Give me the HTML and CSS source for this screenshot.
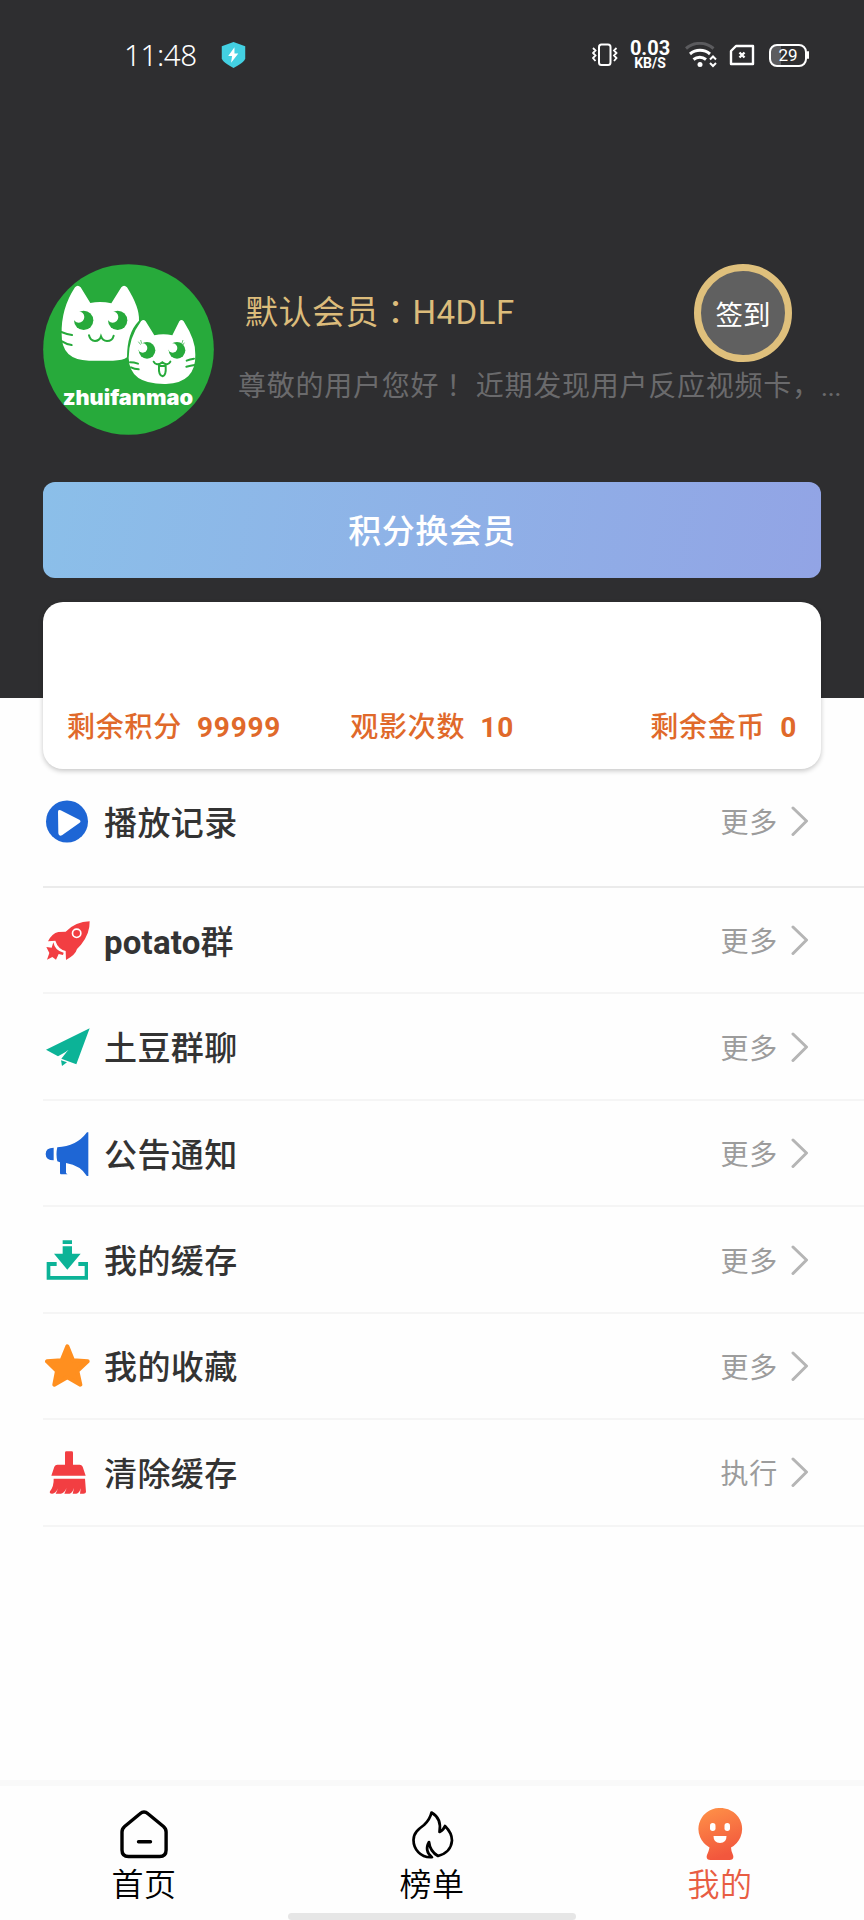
FILE: index.html
```html
<!DOCTYPE html>
<html lang="zh-CN">
<head>
<meta charset="utf-8">
<title>我的</title>
<link rel="stylesheet" href="styles.css">
</head>
<body>
<div class="app">
  <header class="hero">
    <div class="status">
      <div class="status-left">
        <span class="time">11:48</span>
        <svg class="shield" viewBox="0 0 26 28"><path d="M13 .5 25.200 5v12.500c0 3-6 7-12.200 10C7 24.500.8 20.500.8 17.500V5z" fill="#43d0e2"/><path d="M14 6 7.500 15h4l-1 7 7.500-9.500h-4z" fill="#fff"/></svg>
      </div>
      <div class="status-right">
        <svg class="vibrate" viewBox="0 0 26 24" fill="none" stroke="#fff"><rect x="7" y="1.500" width="11.500" height="20.500" rx="2.500" stroke-width="2"/><path d="m1 5 2.500 2.500L1 10l2.500 2.500L1 15l2.500 3M24.500 5 22 7.500l2.500 2.500-2.500 2.500L24.500 15 22 18" stroke-width="1.800"/></svg>
        <div class="speed"><b class="speed-num">0.03</b><b class="speed-unit">KB/S</b></div>
        <svg class="wifi" viewBox="0 0 32 26" fill="none" stroke="#fff" stroke-width="3"><path d="M1 6.500a21 21 0 0 1 27.500 0" stroke="#5b5b5e"/><path d="M5 12a15.500 15.500 0 0 1 20 0M8.500 17.500a10 10 0 0 1 12.500 0"/><circle cx="15" cy="22.500" r="2.500" fill="#fff" stroke="none"/><path d="m25 17.500 3-3 3 3M25 21l3 3 3-3" stroke-width="2"/></svg>
        <svg class="sim" viewBox="0 0 26 22" fill="none" stroke="#fff"><path d="M7 2H24v18H2V7z" stroke-width="2.400" stroke-linejoin="round"/><path d="m10.500 8.500 5 5m0-5-5 5" stroke-width="2.400"/></svg>
        <div class="battery">29</div>
      </div>
    </div>
    <div class="profile">
      <svg class="avatar" viewBox="39 42 513 513">
        <circle cx="295.500" cy="298.500" r="256" fill="#27aa3b"/>
        <path d="M135 112q8-9 17 0l29 47q31-6 63 1l30-48q8-9 17 0 38 60 36 100-36 36-36 110-12 10-42 10h-72q-84-2-82-80-2-76 40-140z" fill="#fff"/>
        <path d="M333 214q7-8 14 0l26 42q27-6 54 0l21-42q6-8 13 0 37 58 35 100 2 84-88 88-110 2-112-78 0-60 37-110z" fill="#fff"/>
        <g fill="#27aa3b"><circle cx="161" cy="211" r="29"/><circle cx="263" cy="211" r="29"/><circle cx="351" cy="301" r="25"/><circle cx="441" cy="301" r="25"/></g>
        <g fill="#fff"><circle cx="146" cy="201" r="17"/><circle cx="248" cy="201" r="17"/><circle cx="338" cy="294" r="14"/><circle cx="428" cy="294" r="14"/></g>
        <g fill="none" stroke="#27aa3b" stroke-width="6" stroke-linecap="round">
          <path d="M177 256q4 17 18 17 14-1 18-14 5 13 18 14 16 0 20-16M94 246q18 7 32 9M96 274q12 8 29 11M300 337q12 0 24 4M303 352q10 5 23 6M492 326q-12 1-22 6M494 345q-12 2-25 5M371 335q7 15 26 2 16 12 24-2"/>
          <path d="M387 348h20q2 28-9 31-13-2-11-31z"/>
        </g>
        <path d="m325 275 7 9m0-14 3 11m120 1 4-12m-1 16 5-8" stroke="#27aa3b" stroke-width="2"/>
        <text class="avatar-name" x="98" y="465" textLength="391" lengthAdjust="spacingAndGlyphs">zhuifanmao</text>
      </svg>
      <div class="profile-info">
        <div class="profile-top">
          <div class="member">默认会员<span class="mid" lang="zh-TW">：</span>H4DLF</div>
          <div class="checkin">签到</div>
        </div>
        <div class="notice"><span>尊敬的用户您好<span class="mid" lang="zh-TW">！</span> 近期发现用户反应视频卡，</span><span class="dots">...</span></div>
      </div>
    </div>
    <div class="exchange">积分换会员</div>
  </header>
  <section class="stats">
    <div class="stat">剩余积分<b>99999</b></div>
    <div class="stat">观影次数<b>10</b></div>
    <div class="stat">剩余金币<b>0</b></div>
  </section>
  <main class="menu">
    <div class="row first">
      <svg class="icon" viewBox="45 56 135 135"><circle cx="111" cy="123.500" r="63" fill="#1e66d5"/><path d="M84 94q0-8 8-4l56 28q7 5 0 10l-52 37q-10 4-11-6z" fill="#fff"/></svg>
      <span class="label">播放记录</span><span class="more">更多</span>
      <svg class="chev" viewBox="0 0 18 30"><path d="m2 2 13.500 13L2 28.500"/></svg>
    </div>
    <div class="row">
      <svg class="icon" viewBox="45 413 135 135"><g fill="#f23e42"><path d="M179 423q1 38-26 70l-12 13q-4 17-33 33l-1-27Q84 506 76 481l-22 2q12-24 31-28l22-1q30-30 72-31z"/><path d="M70 486q5 26 31 31l-2 7-13-3-8 17-11-8-16 8 7-20-9-18 16 2z"/></g><circle cx="140" cy="459" r="12.500" fill="none" stroke="#fff" stroke-width="5"/></svg>
      <span class="label"><b>potato</b>群</span><span class="more">更多</span>
      <svg class="chev" viewBox="0 0 18 30"><path d="m2 2 13.500 13L2 28.500"/></svg>
    </div>
    <div class="row">
      <svg class="icon" viewBox="45 733 135 135"><g fill="#0cb397"><path d="m179 746-131 64 36 20q42-20 88-74-52 44-78 81l45 17z"/><path d="m93 842 18 6-15 11z"/></g></svg>
      <span class="label">土豆群聊</span><span class="more">更多</span>
      <svg class="chev" viewBox="0 0 18 30"><path d="m2 2 13.500 13L2 28.500"/></svg>
    </div>
    <div class="row">
      <svg class="icon" viewBox="45 92 135 135"><g fill="#1e66d5"><path d="M71 142v38q-24 0-24-19t24-19zM82 141q57-2 89-45h4v132h-4q-18-32-63-40v30q4 4 5 4H93q-3 0-3-4v-32l-8-3q-5-21 0-43z"/></g></svg>
      <span class="label">公告通知</span><span class="more">更多</span>
      <svg class="chev" viewBox="0 0 18 30"><path d="m2 2 13.500 13L2 28.500"/></svg>
    </div>
    <div class="row">
      <svg class="icon" viewBox="45 412 135 135"><g fill="#0cb397"><path d="M98 422h28v11H98zM98 440h28v22h26l-40 48-40-48h26z"/><path d="M50 487h30v12H61v30h103v-30h-19v-12h29v53H50z"/></g></svg>
      <span class="label">我的缓存</span><span class="more">更多</span>
      <svg class="chev" viewBox="0 0 18 30"><path d="m2 2 13.500 13L2 28.500"/></svg>
    </div>
    <div class="row">
      <svg class="icon" viewBox="45 731 135 135"><path d="m112 741 17 42 44 3-31 29 9 41-39-22-39 22 8-41-30-29 44-3z" fill="#ff8f1f" stroke="#ff8f1f" stroke-width="12" stroke-linejoin="round"/></svg>
      <span class="label">我的收藏</span><span class="more">更多</span>
      <svg class="chev" viewBox="0 0 18 30"><path d="m2 2 13.500 13L2 28.500"/></svg>
    </div>
    <div class="row">
      <svg class="icon" viewBox="45 1051 135 135"><g fill="#f23e42"><path d="M105 1059q0-4 4-4h16q4 0 4 4v36h20q6 0 9 6l9 27H64l9-27q3-6 9-6h23z"/><path d="M71 1137h94l3 40q-1 6-10 5h-8l2-16q-5 17-14 16h-10l4-17q-7 19-15 17h-14l7-17q-10 19-19 17H77l8-17q-9 18-19 17-9 0-6-7 12-16 11-38z"/></g></svg>
      <span class="label">清除缓存</span><span class="more">执行</span>
      <svg class="chev" viewBox="0 0 18 30"><path d="m2 2 13.500 13L2 28.500"/></svg>
    </div>
  </main>
  <nav class="tabs">
    <div class="tab">
      <svg class="tab-icon" viewBox="0 0 54 54" fill="none" stroke="#000" stroke-width="3.400" stroke-linecap="round"><path d="M23 5.800q4-3.600 8 0l15.500 12.700q2.600 2.300 2.600 5.500v18q0 6.500-6.500 6.500H11.500Q5 48.500 5 42V24q0-3.200 2.600-5.500zM21.500 33.800h12"/></svg>
      <span>首页</span>
    </div>
    <div class="tab">
      <svg class="tab-icon" viewBox="0 0 54 54" fill="none" stroke="#000" stroke-width="2.700" stroke-linejoin="round"><path d="M26.500 4.500Q37 10.500 34.500 24q4-2 5.500-6 7 7 7 14.500-1 12-14 15.500-8-4.500-9-14-5 9 3 15.200C15 50 8.500 40.500 8.500 32c0-7 5-11 10.500-15q6-5.500 7.500-12.500z"/></svg>
      <span>榜单</span>
    </div>
    <div class="tab active">
      <svg class="tab-icon" viewBox="0 0 54 54"><defs><linearGradient id="face" x1="0" y1="0" x2=".3" y2="1"><stop offset="0" stop-color="#ff9348"/><stop offset="1" stop-color="#f2573d"/></linearGradient></defs><path d="M27 0a21 21 0 0 1 11 39.500q0 3 2 7.500 1.500 5-3.500 5h-19q-5 0-3.500-5 2-4.500 2.500-7.500A21 21 0 0 1 27 0z" fill="url(#face)"/><g fill="#fff"><rect x="17" y="15" width="5.500" height="8" rx="2.700"/><rect x="31.500" y="15" width="5.500" height="8" rx="2.700"/><path d="M20.500 28h13q0 7-6.500 7t-6.500-7z"/></g></svg>
      <span>我的</span>
    </div>
    <i class="home-bar"></i>
  </nav>
</div>
</body>
</html>
```
FILE: styles.css
```css
* { box-sizing: border-box; }
body { margin: 0; background: #fff; font-family: Roboto, "Noto Sans CJK SC", sans-serif; }
svg { display: block; flex: none; }
.app { width: 864px; height: 1920px; display: flex; flex-direction: column; background: #fefefe; overflow: hidden; }

.hero { height: 698px; flex: none; background: #2e2e30; padding: 0 43px; }
.status { height: 110px; display: flex; justify-content: space-between; padding: 0 12px 0 81px; color: #fff; }
.status-left, .status-right { display: flex; align-items: center; }
.time { width: 74px; font-family: "Noto Sans", Roboto, sans-serif; font-size: 29.500px; font-weight: 350; line-height: 40px; letter-spacing: -.4px; white-space: nowrap; }
.shield { width: 25px; height: 28px; margin-left: 23px; }
.vibrate { width: 26px; height: 24px; }
.speed { width: 40px; margin-left: 12px; display: flex; flex-direction: column; align-items: center; }
.speed-num { font-size: 20px; line-height: 16px; }
.speed-unit { font-size: 14px; line-height: 14px; }
.wifi { width: 32px; height: 26px; margin-left: 15px; }
.sim { width: 26px; height: 22px; margin-left: 12px; }
.battery { position: relative; width: 38px; height: 23px; margin: 0 2px 0 14px; border: 2.500px solid #fff; border-radius: 8px; background: linear-gradient(90deg, #5c5c5f 30%, transparent 30%); font-size: 17px; line-height: 19px; text-align: center; }
.battery::after { content: ""; position: absolute; right: -4px; top: 5px; width: 2px; height: 8px; border-radius: 2px; background: #fff; }

.profile { display: flex; height: 171px; margin-top: 154px; }
.avatar { width: 171px; height: 171px; }
.avatar-name { font-family: Inter, sans-serif; font-weight: 900; font-size: 62px; fill: #fff; }
.profile-info { margin-left: 24px; width: 597px; flex: none; }
.profile-top { display: flex; justify-content: space-between; align-items: center; height: 98px; padding: 0 43px 0 7px; }
.member { color: #dcbc7b; font-size: 33px; letter-spacing: .5px; line-height: 46px; white-space: nowrap; }
.mid { font-family: "Noto Sans CJK TC", sans-serif; line-height: 0; }
.checkin { width: 98px; height: 98px; padding-top: 3px; border: 7px solid #dfc07c; border-radius: 50%; background: #606060; color: #fff; font-size: 27.500px; line-height: 84px; text-align: center; }
.notice { display: flex; justify-content: space-between; color: #6a6a6c; font-size: 28px; line-height: 40px; margin-top: 5px; letter-spacing: .75px; white-space: nowrap; }
.dots { letter-spacing: -.6px; }
.exchange { height: 96px; margin-top: 47px; border-radius: 12px; background: linear-gradient(100deg, #8bbfe9, #92a4e5); color: #fff; font-size: 33px; font-weight: 500; line-height: 100px; text-align: center; letter-spacing: .5px; }

.stats { position: relative; flex: none; height: 167px; margin: -96px 43px 0; padding: 105px 24px 0; border-radius: 20px; background: #fff; box-shadow: 0 2px 5px rgba(0,0,0,.22); display: flex; justify-content: space-between; color: #e0692a; font-size: 28px; font-weight: 500; line-height: 42px; letter-spacing: .75px; }
.stat:nth-child(2) { margin-right: 67px; }
.stat b { margin-left: 15px; }

.menu { padding-left: 43px; flex: 1; }
.row { height: 106.450px; border-bottom: 2px solid #f5f5f5; display: flex; align-items: center; padding: 0 55px 0 2px; }
.row.first { height: 119px; padding-bottom: 13px; border-color: #ebebeb; }
.icon { width: 45px; height: 45px; }
.label { margin-left: 14px; padding-top: 5px; flex: 1; font-size: 33px; font-weight: 500; letter-spacing: .4px; color: #333; line-height: 46px; }
.label b { letter-spacing: .2px; }
.more { padding-top: 6px; font-size: 28px; letter-spacing: .7px; color: #9c9c9c; line-height: 40px; }
.chev { width: 18px; height: 30px; margin: 0 0 0 13px; fill: none; stroke: #b5b5b5; stroke-width: 3; stroke-linecap: round; stroke-linejoin: round; }

.tabs { position: relative; height: 140px; flex: none; border-top: 6px solid #f9f9f9; background: #fefefe; display: flex; }
.tab { flex: 1; display: flex; flex-direction: column; align-items: center; padding-top: 22px; font-size: 32px; font-weight: 350; line-height: 46px; letter-spacing: .5px; color: #000; }
.tab.active { color: #e85d43; }
.tab-icon { width: 54px; height: 54px; }
.home-bar { position: absolute; left: 288px; bottom: 0; width: 288px; height: 7px; border-radius: 4px; background: #e6e6e6; }
```
